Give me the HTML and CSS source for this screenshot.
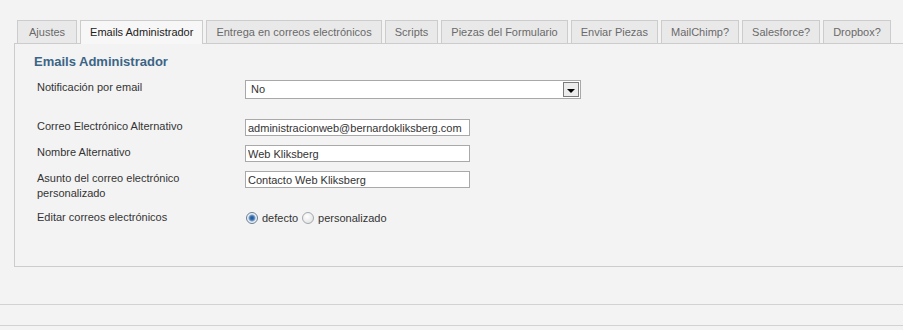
FILE: index.html
```html
<!DOCTYPE html>
<html lang="es">
<head>
  <meta charset="UTF-8" />
  <meta name="viewport" content="width=device-width, initial-scale=1.0" />
  <title>Emails Administrador</title>
  <link rel="stylesheet" href="styles.css">
</head>
<body>
  <div class="wrap">
    <ul class="tabs">
      <li class="first">Ajustes</li>
      <li class="active">Emails Administrador</li>
      <li>Entrega en correos electrónicos</li>
      <li>Scripts</li>
      <li>Piezas del Formulario</li>
      <li>Enviar Piezas</li>
      <li>MailChimp?</li>
      <li>Salesforce?</li>
      <li>Dropbox?</li>
    </ul>

    <div class="panel">
      <h3>Emails Administrador</h3>

      <div class="form">
        <label class="row-first">Notificación por email</label>
        <div class="row-first">
          <span class="select">
            <span class="select-text">No</span>
            <span class="select-btn"></span>
          </span>
        </div>

        <label>Correo Electrónico Alternativo</label>
        <div><input type="text" value="administracionweb@bernardokliksberg.com" /></div>

        <label>Nombre Alternativo</label>
        <div><input type="text" value="Web Kliksberg" /></div>

        <label>Asunto del correo electrónico<br>personalizado</label>
        <div><input type="text" value="Contacto Web Kliksberg" /></div>

        <label>Editar correos electrónicos</label>
        <div class="radios">
          <input type="radio" name="tpl" id="def" checked /><span>defecto</span>
          <input type="radio" name="tpl" id="per" /><span>personalizado</span>
        </div>
      </div>
    </div>
  </div>

  <div class="footer"></div>
</body>
</html>
```

FILE: styles.css
```css
body {
  margin: 0;
  background: #f3f3f3;
  font-family: "Liberation Sans", Arial, sans-serif;
  font-size: 11px;
  color: #333;
}
.wrap {
  padding: 20px 0 0 14px;
}
.tabs {
  display: flex;
  gap: 3px;
  list-style: none;
  margin: 0;
  padding: 0 0 0 3px;
  position: relative;
  z-index: 1;
}
.tabs li {
  height: 22px;
  line-height: 22px;
  padding: 0 9px;
  background: #e9e9e9;
  border: 1px solid #cccccc;
  border-bottom: none;
  color: #6a6a6a;
  white-space: nowrap;
}
.tabs li.first {
  padding: 0 11px;
}
.tabs li.active {
  background: #f7f7f7;
  color: #222;
  height: 23px;
  margin-bottom: -1px;
}
.panel {
  border-top: 1px solid #cccccc;
  border-left: 1px solid #cccccc;
  border-bottom: 1px solid #cccccc;
  padding: 10px 0 41px 22px;
}
.panel h3 {
  margin: 0 0 10px -3px;
  font-size: 13px;
  line-height: 16px;
  color: #3b6587;
}
.form {
  display: grid;
  grid-template-columns: 208px 1fr;
  row-gap: 9px;
}
.form label {
  line-height: 15px;
  color: #333;
}
.form .row-first {
  margin-bottom: 11px;
}
.select {
  display: flex;
  align-items: center;
  width: 334px;
  height: 17px;
  background: #fff;
  border: 1px solid #a8a8a8;
}
.select-text {
  flex: 1;
  padding-left: 5px;
  padding-bottom: 1px;
  color: #333;
}
.select-btn {
  width: 14px;
  height: 13px;
  margin-right: 1px;
  background: #ececec;
  border: 1px solid #7b7b7b;
  display: flex;
  align-items: center;
  justify-content: center;
}
.select-btn::after {
  content: "";
  border-left: 4px solid transparent;
  border-right: 4px solid transparent;
  border-top: 4px solid #000;
  margin-top: 2px;
}
input[type="text"] {
  display: block;
  box-sizing: border-box;
  width: 225px;
  height: 17px;
  margin: 0;
  padding: 0 2px;
  border: 1px solid #a9a9a9;
  background: #fff;
  font-family: "Liberation Sans", Arial, sans-serif;
  font-size: 11px;
  color: #333;
}
.radios {
  display: flex;
  align-items: center;
  height: 15px;
}
.radios span {
  margin: 0 3px 0 4px;
  color: #333;
}
input[type="radio"] {
  appearance: none;
  -webkit-appearance: none;
  width: 12px;
  height: 12px;
  margin: 0 0 0 1px;
  border-radius: 50%;
  border: 1px solid #a4a9ae;
  background: radial-gradient(circle at 40% 35%, #ffffff, #dcdcdc);
}
input[type="radio"]:checked {
  border-color: #6b7e92;
  background: radial-gradient(circle, #1f4f8e 0, #3e74b4 2px, #7fa4cc 3px, #e9eef4 4px, #f4f6f8 6px);
}
.footer {
  margin-top: 37px;
  height: 20px;
  border-top: 1px solid #d2d2d2;
  border-bottom: 1px solid #d2d2d2;
}
```
